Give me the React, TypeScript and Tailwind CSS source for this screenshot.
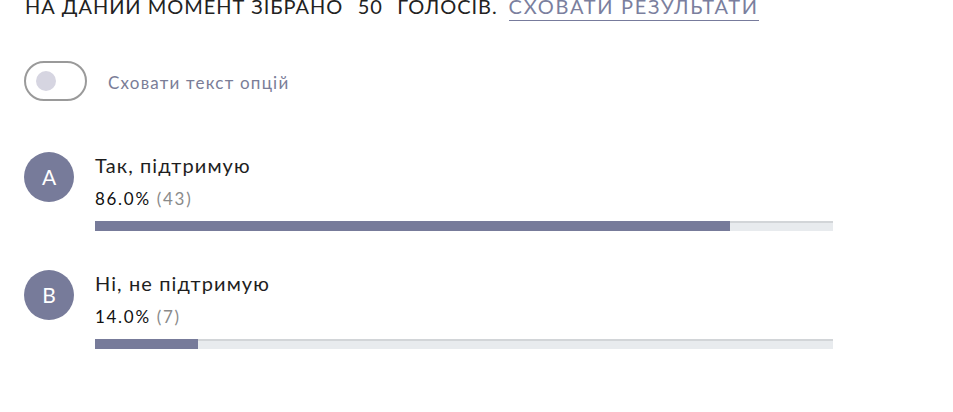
import React from "react";

const options = [
  { letter: "A", title: "Так, підтримую", pct: 86.0, count: 43 },
  { letter: "B", title: "Ні, не підтримую", pct: 14.0, count: 7 },
];

export default function App() {
  return (
    <div className="w-[953px] h-[412px] overflow-hidden bg-white font-['Lato',sans-serif] text-[#222]">
      <div className="h-[24px] overflow-hidden">
        <div className="-mt-[6px] pl-[25px] flex items-start gap-[11px] text-[20px] leading-[24px] uppercase tracking-[0.95px] text-[#222]">
          <span>
            НА ДАНИЙ МОМЕНТ ЗІБРАНО <span className="relative -top-[9px]">"</span>50<span className="relative -top-[9px]">"</span> ГОЛОСІВ.
          </span>
          <span className="text-[#7b7f9e] tracking-[1.7px] border-b border-[#777b9c] pb-[2px] leading-[24px]">Сховати результати</span>
        </div>
      </div>

      <div className="mt-[37px] pl-[24px] flex items-center gap-[21px]">
        <div className="w-[63px] h-[40px] rounded-full border-2 border-[#9a9a9a] flex items-center pl-[10px]">
          <div className="w-[20px] h-[20px] rounded-full bg-[#d6d5e1]" />
        </div>
        <span className="mt-[3px] text-[17px] tracking-[1.2px] text-[#7a7d97]">Сховати текст опцій</span>
      </div>

      <div className="mt-[51px] flex flex-col gap-[39px]">
        {options.map((o) => (
          <div key={o.letter} className="flex items-start pl-[24px] gap-[21px]">
            <div className="w-[50px] h-[50px] rounded-full bg-[#777b9a] flex items-center justify-center text-white text-[21px]">
              {o.letter}
            </div>
            <div className="flex flex-col w-[738px]">
              <div className="text-[20px] leading-[26px] tracking-[1.1px] text-[#1e1e1e]">{o.title}</div>
              <div className="mt-[10px] text-[17px] leading-[22px] tracking-[1.7px] text-[#111]">
                {o.pct.toFixed(1)}% <span className="text-[#8a8a8a]">({o.count})</span>
              </div>
              <div className="mt-[11px] h-[10px] bg-[#e8ebee] border-t-2 border-[#d2d5d8] relative">
                <div className="absolute left-0 -top-[2px] h-[10px] bg-[#777b9a]" style={{ width: `${o.pct}%` }} />
              </div>
            </div>
          </div>
        ))}
      </div>
    </div>
  );
}
